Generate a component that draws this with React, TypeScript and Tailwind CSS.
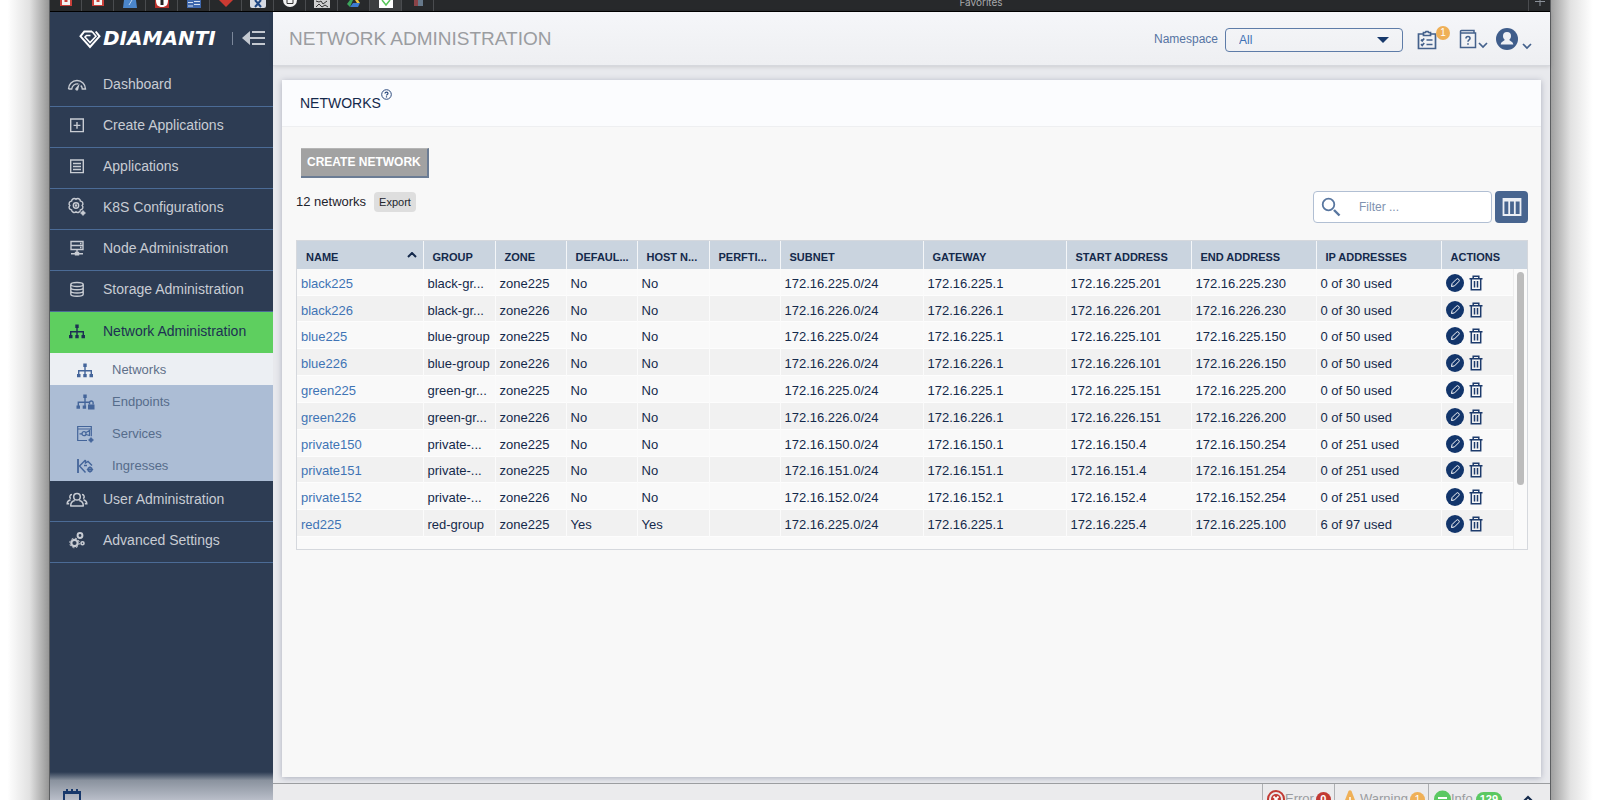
import type { ReactNode } from "react";

type Network = {
  name: string;
  group: string;
  zone: string;
  isDefault: string;
  host: string;
  subnet: string;
  gateway: string;
  start: string;
  end: string;
  used: string;
};

const networks: Network[] = [
  { name: "black225", group: "black-gr...", zone: "zone225", isDefault: "No", host: "No", subnet: "172.16.225.0/24", gateway: "172.16.225.1", start: "172.16.225.201", end: "172.16.225.230", used: "0 of 30 used" },
  { name: "black226", group: "black-gr...", zone: "zone226", isDefault: "No", host: "No", subnet: "172.16.226.0/24", gateway: "172.16.226.1", start: "172.16.226.201", end: "172.16.226.230", used: "0 of 30 used" },
  { name: "blue225", group: "blue-group", zone: "zone225", isDefault: "No", host: "No", subnet: "172.16.225.0/24", gateway: "172.16.225.1", start: "172.16.225.101", end: "172.16.225.150", used: "0 of 50 used" },
  { name: "blue226", group: "blue-group", zone: "zone226", isDefault: "No", host: "No", subnet: "172.16.226.0/24", gateway: "172.16.226.1", start: "172.16.226.101", end: "172.16.226.150", used: "0 of 50 used" },
  { name: "green225", group: "green-gr...", zone: "zone225", isDefault: "No", host: "No", subnet: "172.16.225.0/24", gateway: "172.16.225.1", start: "172.16.225.151", end: "172.16.225.200", used: "0 of 50 used" },
  { name: "green226", group: "green-gr...", zone: "zone226", isDefault: "No", host: "No", subnet: "172.16.226.0/24", gateway: "172.16.226.1", start: "172.16.226.151", end: "172.16.226.200", used: "0 of 50 used" },
  { name: "private150", group: "private-...", zone: "zone225", isDefault: "No", host: "No", subnet: "172.16.150.0/24", gateway: "172.16.150.1", start: "172.16.150.4", end: "172.16.150.254", used: "0 of 251 used" },
  { name: "private151", group: "private-...", zone: "zone225", isDefault: "No", host: "No", subnet: "172.16.151.0/24", gateway: "172.16.151.1", start: "172.16.151.4", end: "172.16.151.254", used: "0 of 251 used" },
  { name: "private152", group: "private-...", zone: "zone226", isDefault: "No", host: "No", subnet: "172.16.152.0/24", gateway: "172.16.152.1", start: "172.16.152.4", end: "172.16.152.254", used: "0 of 251 used" },
  { name: "red225", group: "red-group", zone: "zone225", isDefault: "Yes", host: "Yes", subnet: "172.16.225.0/24", gateway: "172.16.225.1", start: "172.16.225.4", end: "172.16.225.100", used: "6 of 97 used" },
];

const columns = [
  { label: "NAME", width: "w-[126px]" },
  { label: "GROUP", width: "w-[72px]" },
  { label: "ZONE", width: "w-[71px]" },
  { label: "DEFAUL...", width: "w-[71px]" },
  { label: "HOST N...", width: "w-[72px]" },
  { label: "PERFTI...", width: "w-[71px]" },
  { label: "SUBNET", width: "w-[143px]" },
  { label: "GATEWAY", width: "w-[143px]" },
  { label: "START ADDRESS", width: "w-[125px]" },
  { label: "END ADDRESS", width: "w-[125px]" },
  { label: "IP ADDRESSES", width: "w-[125px]" },
  { label: "ACTIONS", width: "w-[86px]" },
];

function Icon({ children }: { children: ReactNode }) {
  return (
    <svg width="20" height="20" viewBox="0 0 20 20" fill="none" stroke="currentColor" strokeWidth="1.4" className="shrink-0" aria-hidden="true">
      {children}
    </svg>
  );
}

const dashboardIcon = (
  <Icon>
    <path d="M1.500 15a8.500 8.500 0 0 1 17 0h-3.200a5.600 5.600 0 0 0-1.500-3.600M1.500 15h3.200a5.600 5.600 0 0 1 6.600-5" />
    <path d="M8.200 14.700 12.600 9.500l-1.400 6.200a1.600 1.600 0 0 1-3-1Z" fill="currentColor" stroke="none" />
  </Icon>
);

const createIcon = (
  <Icon>
    <path d="M3.700 4h12.600v12.600H3.700zM10 7v6.800M6.600 10.400h6.800" />
  </Icon>
);

const applicationsIcon = (
  <Icon>
    <path d="M3.700 4h12.600v12.600H3.700z" />
    <path d="M6 7.500h8M6 10.500h8M6 13.500h8" strokeWidth="1.300" />
  </Icon>
);

const k8sIcon = (
  <Icon>
    <path d="M15.200 8.500A2.600 2.600 0 0 1 13.400 12.900A2.600 2.600 0 0 1 9 14.700A2.600 2.600 0 0 1 4.600 12.900A2.600 2.600 0 0 1 2.800 8.500A2.600 2.600 0 0 1 4.600 4.100A2.600 2.600 0 0 1 9 2.300A2.600 2.600 0 0 1 13.400 4.100A2.600 2.600 0 0 1 15.200 8.500Z" />
    <circle cx="9" cy="8.500" r="2.700" />
    <circle cx="9" cy="8.500" r=".6" />
    <circle cx="16" cy="16" r="2" fill="currentColor" stroke="none" />
    <path d="M16 13.200v5.600M13.200 16h5.600" strokeWidth="1" />
  </Icon>
);

const nodeIcon = (
  <Icon>
    <path d="M4 3.500h12v8H4zM4 7.500h12M13 5.500h1.500M13 9.500h1.500M10 11.500v3M4 15.700h12M8.500 14.500h3v2.200h-3z" />
  </Icon>
);

const storageIcon = (
  <Icon>
    <ellipse cx="10" cy="5.500" rx="6.200" ry="2" />
    <path d="M3.800 5.500v9.700c0 1.100 2.800 2 6.200 2s6.200-.9 6.200-2V5.500M3.800 8.700c0 1.100 2.800 2 6.200 2s6.200-.9 6.200-2M3.800 12c0 1.100 2.800 2 6.200 2s6.200-.9 6.200-2" />
  </Icon>
);

const treeIcon = (
  <Icon>
    <path d="M8.300 3.500h3.400v3.400H8.300zM2 14h3.500v3.200H2zM8.300 14h3.400v3.200H8.300zM14.500 14H18v3.200h-3.500z" fill="currentColor" stroke="none" />
    <path d="M10 6v8.500M3.700 14.500v-3.700h12.600v3.700" />
  </Icon>
);

const endpointsIcon = (
  <Icon>
    <path d="M8.300 2.500h3.400v3.400H8.300zM1.500 13.600H5v3.200H1.500zM7.700 13.600h3.400v3.200H7.700zM13 12.400h6.500v5H13z" fill="currentColor" stroke="none" />
    <path d="M10 5v9M3.300 14v-3.800h11" />
    <path d="M14.500 12.500v-1.700a1.800 1.800 0 0 1 3.600 0v1.700" />
  </Icon>
);

const servicesIcon = (
  <Icon>
    <path d="M12 16.500H2.700v-14h13.600v9.800M2.700 5h13.600M4.500 9.800h2.700M11 8.500l3.500-2v5l-3.500-1" strokeWidth="1.200" />
    <circle cx="9" cy="9.700" r="2" strokeWidth="1.200" />
    <circle cx="16" cy="16" r="2" fill="currentColor" stroke="none" />
    <path d="M16 13.200v5.600M13.200 16h5.600" strokeWidth="1" />
  </Icon>
);

const ingressesIcon = (
  <Icon>
    <path d="M3 3v14" strokeWidth="1.800" />
    <path d="M10.500 4 4.500 10l6 6.500M10.500 4v3l2.500-1.500 4 4M9 9.500h3" />
    <circle cx="15" cy="13.500" r="2" />
    <path d="M15 10.300v6.400M11.800 13.500h6.400" strokeWidth="1" />
  </Icon>
);

const usersIcon = (
  <svg width="22" height="20" viewBox="0 0 22 20" fill="none" stroke="currentColor" strokeWidth="1.500" className="-mx-px shrink-0" aria-hidden="true">
    <circle cx="11" cy="7.800" r="3.300" />
    <path d="M4.700 16.900c0-3.600 2-5 4.100-5.400M17.300 16.900c0-3.600-2-5-4.100-5.400M4.200 17h13.600" />
    <path d="M6 5.500a2.300 2.300 0 0 0-1.200 4.200M16 5.500a2.300 2.300 0 0 1 1.200 4.200M4.500 10.800c-2 .5-3.300 1.700-3.300 4h2M17.500 10.800c2 .5 3.300 1.700 3.300 4h-2" />
  </svg>
);

const settingsIcon = (
  <Icon>
    <circle cx="7.500" cy="13" r="3.200" strokeWidth="2.200" />
    <circle cx="7.500" cy="13" r="4.800" strokeWidth="1" strokeDasharray="1.900 1.870" />
    <circle cx="13" cy="5.500" r="2.400" strokeWidth="2" />
    <circle cx="15.500" cy="13.300" r="1.500" strokeWidth="1.600" />
  </Icon>
);

function NavItem({ icon, label, active = false }: { icon: ReactNode; label: string; active?: boolean }) {
  return (
    <a
      href="#"
      className={
        active
          ? "flex h-[41px] items-center gap-4 bg-[#5ecf5f] pr-2 pb-1 pl-[17px] text-sm text-[#1d3153]"
          : "flex h-[41px] items-center gap-4 border-b border-[#4b6b96] pr-2 pb-1 pl-[17px] text-sm text-[#c8ccd3]"
      }
    >
      {icon}
      {label}
    </a>
  );
}

function SubItem({ icon, label, active = false }: { icon: ReactNode; label: string; active?: boolean }) {
  return (
    <a
      href="#"
      className={
        active
          ? "flex h-8 items-center gap-[17px] bg-[#eceff3] pt-0.5 pl-[25px] text-[13px] leading-4 text-[#5f7089]"
          : "flex h-8 items-center gap-[17px] bg-[#acbdd5] pt-0.5 pl-[25px] text-[13px] leading-4 text-[#566c8b]"
      }
    >
      <span className="flex text-[#44659a]">{icon}</span>
      <span>{label}</span>
    </a>
  );
}

function Tab({ children, active = false }: { children: ReactNode; active?: boolean }) {
  return (
    <div className={active ? "flex w-8 items-end justify-center border-r border-[#4a4c4f] bg-[#3c3e40] pb-[3px]" : "flex w-8 items-end justify-center border-r border-[#4a4c4f] pb-[3px]"}>
      <svg width="16" height="8" viewBox="0 0 16 8" aria-hidden="true">
        {children}
      </svg>
    </div>
  );
}

function TabBar() {
  return (
    <div className="flex h-3 shrink-0 overflow-hidden border-b border-black bg-[#27292b]">
      <Tab>
        <path d="M2 0h12v6H2z" fill="#c9403a" />
        <path d="M4 0h8v5H4z" fill="#f3f3f3" />
        <path d="M6.500 0h3v2h-3z" fill="#c9403a" />
      </Tab>
      <Tab>
        <path d="M2 0h12v6H2z" fill="#c9403a" />
        <path d="M4 0h8v5H4z" fill="#f3f3f3" />
        <path d="M6.500 0h3v2h-3z" fill="#c9403a" />
      </Tab>
      <Tab>
        <path d="M2 0h12l1 8H1z" fill="#4b86cb" />
        <path d="M10 0 7 5" stroke="#b9d3f0" />
      </Tab>
      <Tab>
        <path d="M1 0h14v8H1z" fill="#b9322c" />
        <path d="M2 0h12c0 5-2 7-6 7S2 5 2 0Z" fill="#fff" />
        <path d="M6.500 0h3v5h-3z" fill="#222" />
      </Tab>
      <Tab>
        <path d="M1 0h14v8H1z" fill="#3f68ad" />
        <path d="M2 2.500h5M8 1.500h6M8 4.500h6M2 6h5" stroke="#d5e1f2" />
      </Tab>
      <Tab>
        <path d="M1 0h14l-7 7z" fill="#cc3a32" />
      </Tab>
      <Tab>
        <path d="M0 0h16v6a2 2 0 0 1-2 2H2a2 2 0 0 1-2-2z" fill="#d6dae2" />
        <path d="m5 0 6 7M11 0 5 7" stroke="#1f4783" strokeWidth="2" />
      </Tab>
      <Tab>
        <path d="M1 0h14a7 7 0 0 1-14 0Z" fill="#f2f2f2" />
        <path d="M5 0v3.500h6V0" stroke="#333" fill="none" />
      </Tab>
      <Tab>
        <path d="M0 0h16v8H0z" fill="#cfcfcf" />
        <path d="M2 1l3 1 2-1 2 3 4-3M2 7l3-3 3 3 3-2 3 2" stroke="#333" fill="none" />
      </Tab>
      <Tab>
        <path d="M1 4 4 0h3L4 7z" fill="#3ba55c" />
        <path d="M4 7h8l2-4H7z" fill="#3d7ad0" />
        <path d="M9 0h3l2 3h-3z" fill="#ecc443" />
      </Tab>
      <Tab active>
        <path d="M1 0h14v8H1z" fill="#fff" />
        <path d="m4 0 4 5 4-5" stroke="#58c65a" strokeWidth="1.500" fill="none" />
      </Tab>
      <Tab>
        <path d="M4 0h4v6H4z" fill="#8a4347" />
        <path d="M8 0h5v6H8z" fill="#66788a" />
      </Tab>
      <div className="flex flex-1 items-end justify-center pb-1">
        <span className="text-[10px] leading-[10px] text-[#a6a8aa]" style={{ fontFamily: "Inter, sans-serif" }}>Favorites</span>
      </div>
      <button type="button" aria-label="New tab" className="flex w-[22px] items-start justify-center border-l border-[#4a4c4f] text-[#8b9199]">
        <svg width="12" height="6" viewBox="0 0 12 6" stroke="currentColor" aria-hidden="true">
          <path d="M1 1.500h10M6 0v6" />
        </svg>
      </button>
    </div>
  );
}

function Sidebar() {
  return (
    <aside className="flex w-[223px] shrink-0 flex-col overflow-hidden bg-[#2d3c53]">
      <div className="flex h-[54px] shrink-0 items-center pb-0.5 pl-[29px] text-white">
        <svg width="22" height="19" viewBox="0 0 22 19" fill="none" stroke="currentColor" strokeWidth="2" className="mt-0.5 shrink-0" aria-hidden="true">
          <path d="M13 1.500H5.300L1.500 6.300 11 17l9.500-10.700L16.700 1.500" />
          <path d="M13 1.500 17 6.300l-6 6.200-5-5.500 1.500-1.500h4" strokeWidth="1.600" />
        </svg>
        <span className="ml-0.5 text-[20px] leading-6 font-bold italic" style={{ fontFamily: "'DejaVu Sans', sans-serif" }}>DIAMANTI</span>
        <span className="ml-auto h-[13px] w-px bg-[#7b879a]" />
        <button type="button" aria-label="Collapse menu" className="mr-[7px] ml-[9px] text-[#c3c8d0]">
          <svg width="24" height="16" viewBox="0 0 24 16" fill="currentColor" aria-hidden="true">
            <path d="M0 8 8 1v14zM10 1h13v2H10zM8 7h15v2H8zM10 13h13v2H10z" />
          </svg>
        </button>
      </div>
      <nav className="flex-1 overflow-hidden">
        <NavItem icon={dashboardIcon} label="Dashboard" />
        <NavItem icon={createIcon} label="Create Applications" />
        <NavItem icon={applicationsIcon} label="Applications" />
        <NavItem icon={k8sIcon} label="K8S Configurations" />
        <NavItem icon={nodeIcon} label="Node Administration" />
        <NavItem icon={storageIcon} label="Storage Administration" />
        <NavItem icon={treeIcon} label="Network Administration" active />
        <SubItem icon={treeIcon} label="Networks" active />
        <SubItem icon={endpointsIcon} label="Endpoints" />
        <SubItem icon={servicesIcon} label="Services" />
        <SubItem icon={ingressesIcon} label="Ingresses" />
        <NavItem icon={usersIcon} label="User Administration" />
        <NavItem icon={settingsIcon} label="Advanced Settings" />
      </nav>
      <div className="h-7 shrink-0 overflow-hidden bg-linear-to-b from-[#2d3c53] via-[#8a929e] via-30% to-[#b9bec9] pt-[17px] pl-[13px]">
        <svg width="18" height="18" viewBox="0 0 18 18" fill="none" stroke="#17386b" strokeWidth="2" aria-hidden="true">
          <path d="M1 3h16v14H1zM1 4h16M4 0v3M9 0v3M14 0v3" />
        </svg>
      </div>
    </aside>
  );
}

function SmallChevron() {
  return (
    <svg width="10" height="7" viewBox="0 0 10 7" fill="none" stroke="currentColor" strokeWidth="1.700" aria-hidden="true">
      <path d="m1 1 4 4 4-4" />
    </svg>
  );
}

function Header() {
  return (
    <header className="z-10 flex h-[54px] shrink-0 items-center justify-between border-b border-[#d6d8dd] bg-linear-to-b from-[#f5f6f9] to-[#eeeff2] pr-[18px] pl-4 shadow-[0_1px_4px_rgba(0,0,0,0.12)]">
      <h1 className="text-[19px] leading-6 text-[#9b9da1]">NETWORK ADMINISTRATION</h1>
      <div className="flex items-center text-[#44618c]">
        <label htmlFor="namespace" className="mr-[7px] text-xs text-[#5674a3]">Namespace</label>
        <div className="relative mt-0.5 mr-[14px]">
          <select id="namespace" className="block h-6 w-[178px] appearance-none rounded border border-[#5e7ca8] pr-8 pl-[13px] text-xs text-[#3d71b5]">
            <option>All</option>
          </select>
          <svg width="12" height="6" viewBox="0 0 12 6" fill="#17386b" className="pointer-events-none absolute top-[9px] right-[14px]" aria-hidden="true">
            <path d="M0 0h12L6 6z" />
          </svg>
        </div>
        <button type="button" aria-label="Tasks" className="relative mt-0.5 mr-[22px]">
          <svg width="20" height="20" viewBox="0 0 20 20" fill="none" stroke="currentColor" strokeWidth="1.700" aria-hidden="true">
            <path d="M6.500 4h-5v14.500h17V4h-5" />
            <path d="M6.500 2.500h2l.5-1h2l.5 1h2v3h-7zM9.500 10h6M9.500 14.500h6M4 9.700l1.200 1.200 2-2.400M4 14.200l1.200 1.200 2-2.400" />
          </svg>
          <span className="absolute -top-1 -right-[13px] flex h-[14px] w-[14px] items-center justify-center rounded-full bg-[#efb057] text-[10px] leading-none text-white">1</span>
        </button>
        <button type="button" aria-label="Help" className="mr-2 flex items-end">
          <svg width="18" height="20" viewBox="0 0 18 20" fill="none" stroke="currentColor" strokeWidth="1.500" aria-hidden="true">
            <path d="M1.500 4h15v14.500h-15V2.500a1 1 0 0 1 1-1H15V4" />
            <path d="M7 9.500c0-2.600 4-2.600 4 0 0 1.500-2 1.500-2 3.300M9 14.300v1.400" strokeWidth="1.600" />
          </svg>
          <span className="ml-px"><SmallChevron /></span>
        </button>
        <button type="button" aria-label="Account" className="flex items-end">
          <svg width="22" height="22" viewBox="0 0 22 22" aria-hidden="true">
            <circle cx="11" cy="11" r="11" fill="#3f5d8b" />
            <path d="M11 4a4 4 0 0 1 4 4c0 1.700-.8 3-1.700 3.800.2 1.300 3.700 1.500 4 4.700H4.700c.3-3.200 3.800-3.400 4-4.700C7.800 11 7 9.700 7 8a4 4 0 0 1 4-4Z" fill="#eef0f5" />
          </svg>
          <span className="ml-1"><SmallChevron /></span>
        </button>
      </div>
    </header>
  );
}

function RowActions({ name }: { name: string }) {
  return (
    <div className="flex items-center gap-[5px]">
      <button type="button" aria-label={`Edit ${name}`}>
        <svg width="18" height="18" viewBox="0 0 18 18" aria-hidden="true">
          <circle cx="9" cy="9" r="9" fill="#12356b" />
          <path d="m5.500 12.500.6-3 4.200-4.200a1.200 1.200 0 0 1 2.400 2.400l-4.200 4.200z" fill="none" stroke="#fff" strokeWidth="1" />
        </svg>
      </button>
      <button type="button" aria-label={`Delete ${name}`}>
        <svg width="14" height="16" viewBox="0 0 14 16" fill="none" stroke="#1d3b6c" strokeWidth="1.500" aria-hidden="true">
          <path d="M.5 3.700h13M4.200 3.500V1.200h5.600v2.300M2.300 4v10.800h9.400V4M5.500 6v6.500M8.500 6v6.500" />
        </svg>
      </button>
    </div>
  );
}

function NetworkTable() {
  return (
    <div className="relative mt-[17px] border border-[#d5d8dd] bg-[#fafafa] pb-3">
      <table className="h-[296px] w-full table-fixed border-collapse text-left text-[13px] leading-4 text-[#14294b]">
        <thead>
          <tr className="h-7 bg-[#cad4df]">
            {columns.map((col) => (
              <th key={col.label} scope="col" className={`${col.width} h-7 border-r border-[#f4f6f8] pt-1 pr-1 pb-0 pl-[9px] text-[11px] font-bold whitespace-nowrap last:border-r-0`}>
                <div className="flex items-center justify-between">
                  <span>{col.label}</span>
                  {col.label === "NAME" && (
                    <svg width="10" height="6" viewBox="0 0 10 6" fill="none" stroke="currentColor" strokeWidth="2" className="mr-0.5 mb-1 shrink-0" aria-hidden="true">
                      <path d="m1 5 4-4 4 4" />
                    </svg>
                  )}
                </div>
              </th>
            ))}
          </tr>
        </thead>
        <tbody className="whitespace-nowrap">
          {networks.map((n) => (
            <tr key={n.name} className="border-b border-[#fdfdfd] odd:bg-[#f9f9f9] even:bg-[#f1f1f1]">
              <td className="border-r border-[#fbfbfb] px-1 pt-1"><a href="#" className="text-[#3f74b5]">{n.name}</a></td>
              <td className="border-r border-[#fbfbfb] px-1 pt-1">{n.group}</td>
              <td className="border-r border-[#fbfbfb] px-1 pt-1">{n.zone}</td>
              <td className="border-r border-[#fbfbfb] px-1 pt-1">{n.isDefault}</td>
              <td className="border-r border-[#fbfbfb] px-1 pt-1">{n.host}</td>
              <td className="border-r border-[#fbfbfb] px-1 pt-1" />
              <td className="border-r border-[#fbfbfb] px-1 pt-1">{n.subnet}</td>
              <td className="border-r border-[#fbfbfb] px-1 pt-1">{n.gateway}</td>
              <td className="border-r border-[#fbfbfb] px-1 pt-1">{n.start}</td>
              <td className="border-r border-[#fbfbfb] px-1 pt-1">{n.end}</td>
              <td className="border-r border-[#fbfbfb] px-1 pt-1">{n.used}</td>
              <td className="px-1 pt-0.5"><RowActions name={n.name} /></td>
            </tr>
          ))}
        </tbody>
      </table>
      {/* scroll track */}
      <div className="absolute top-7 right-0 bottom-0 w-[14px] border-l border-[#ececec] bg-[#fafafa] pt-[3px] pl-[3px]">
        <div className="h-[213px] w-[7px] rounded-full bg-[#bcbcbc]" />
      </div>
    </div>
  );
}

function Panel() {
  return (
    <section className="flex flex-1 flex-col overflow-hidden bg-[#f8f8f8] shadow-[0_1px_6px_rgba(60,70,100,0.35)]">
      <div className="flex h-[47px] shrink-0 items-center border-b border-[#eeeff1] bg-[#fbfcfe] pl-[18px] text-[#14294b]">
        <h2 className="text-sm">NETWORKS</h2>
        <button type="button" aria-label="About networks" className="mb-[18px]">
          <svg width="11" height="11" viewBox="0 0 11 11" fill="none" stroke="#2b4a7c" aria-hidden="true">
            <circle cx="5.500" cy="5.500" r="4.800" />
            <path d="M4 4.600c0-1.900 3-1.900 3 0 0 1-1.500 1-1.500 2M5.500 7.300v1.200" strokeWidth="1.200" />
          </svg>
        </button>
      </div>
      <div className="pt-[21px] pr-[13px] pl-[14px]">
        <button type="button" className="ml-[5px] block h-[30px] border-t border-r-2 border-b-2 border-t-[#b5b5b5] border-r-[#6b7c94] border-b-[#6b7c94] bg-[#a2a2a2] px-[6px] pb-0.5 text-xs leading-4 font-bold whitespace-nowrap text-white">
          CREATE NETWORK
        </button>
        <div className="mt-[13px] flex h-8 items-start justify-between">
          <div className="flex h-[22px] items-center gap-2">
            <span className="text-[13px] leading-4 text-[#1f242c]">12 networks</span>
            <button type="button" className="h-5 rounded-sm bg-[#dedede] px-[5px] text-[11px] text-[#22262d]">Export</button>
          </div>
          <div className="flex gap-[3px]">
            <label className="flex h-8 w-[179px] items-center rounded border border-[#b1bfd3] bg-white pl-[7px]">
              <svg width="20" height="20" viewBox="0 0 20 20" fill="none" stroke="#58769f" className="shrink-0" aria-hidden="true">
                <circle cx="7.500" cy="7.500" r="5.800" strokeWidth="1.800" />
                <path d="m13 13 5.500 5.500" strokeWidth="2.400" />
              </svg>
              <input type="text" aria-label="Filter" placeholder="Filter ..." className="ml-[18px] w-full min-w-0 text-xs outline-none placeholder:text-[#8093b0]" />
            </label>
            <button type="button" aria-label="Columns" className="flex h-8 w-[33px] items-center justify-center rounded-sm bg-[#48658f]">
              <svg width="20" height="18" viewBox="0 0 20 18" fill="none" stroke="#eceff4" strokeWidth="1.800" aria-hidden="true">
                <path d="M1.500 1h17v16h-17zM1 2.500h18M7.200 3v14M12.800 3v14" />
              </svg>
            </button>
          </div>
        </div>
        <NetworkTable />
      </div>
    </section>
  );
}

function StatusBar() {
  return (
    <footer className="h-[17px] shrink-0 overflow-hidden border-t border-[#9b9da0] bg-[#ebebed] text-[13px] text-[#9a9ca0]">
      <div className="flex h-[30px] items-center justify-end">
        <div className="flex h-full w-[72px] items-center border-l border-[#aeb0b3] pl-1">
          <svg width="18" height="18" viewBox="0 0 18 18" fill="none" stroke="#c23a34" className="shrink-0" aria-hidden="true">
            <circle cx="9" cy="9" r="8" strokeWidth="2" />
            <circle cx="9" cy="9" r="5" fill="#c23a34" stroke="none" />
            <path d="m6.500 6.500 5 5M11.500 6.500l-5 5" stroke="#fff" strokeWidth="1.800" />
          </svg>
          Error
          <span className="ml-0.5 flex h-[15px] w-[15px] shrink-0 items-center justify-center rounded-full bg-[#c23a34] text-[11px] font-bold text-white">0</span>
        </div>
        <div className="flex h-full w-[94px] items-center border-l border-[#aeb0b3] pl-[7px]">
          <svg width="16" height="18" viewBox="0 0 16 18" className="mr-0.5 shrink-0" aria-hidden="true">
            <path d="M6.500 1a2 2 0 0 1 3 0L16 18H0z" fill="#efb057" />
            <path d="M8 7v5M8 13.500v2" stroke="#fff" strokeWidth="1.500" />
          </svg>
          Warning
          <span className="ml-0.5 flex h-[15px] w-[15px] shrink-0 items-center justify-center rounded-full bg-[#efb057] text-[11px] text-white">1</span>
        </div>
        <div className="flex h-full w-[122px] items-center border-l border-[#aeb0b3] pl-[5px]">
          <svg width="17" height="18" viewBox="0 0 17 18" className="shrink-0" aria-hidden="true">
            <circle cx="8.500" cy="9" r="8.500" fill="#5bc862" />
            <path d="M4 8h9" stroke="#fff" strokeWidth="2" />
          </svg>
          Info
          <span className="ml-[3px] flex h-[15px] items-center rounded-full bg-[#5bc862] px-1 text-[11px] font-bold text-white">129</span>
          <button type="button" aria-label="Expand events" className="ml-auto pr-4">
            <svg width="12" height="8" viewBox="0 0 12 8" fill="none" stroke="#14294b" strokeWidth="2.200" aria-hidden="true">
              <path d="m1 7 5-5 5 5" />
            </svg>
          </button>
        </div>
      </div>
    </footer>
  );
}

export default function App() {
  return (
    <div className="flex h-screen overflow-hidden bg-white" style={{ fontFamily: "'Liberation Sans', Arial, sans-serif" }}>
      <div className="w-[49px] shrink-0 bg-linear-to-l from-[#969696] via-[#e2e2e2] via-40% to-white to-85%" />
      <div className="flex min-w-0 flex-1 flex-col border-x border-[#5c5e61]">
        <TabBar />
        <div className="flex min-h-0 flex-1">
          <Sidebar />
          <main className="flex min-w-0 flex-1 flex-col bg-[#e8e9ed]">
            <Header />
            <div className="flex min-h-0 flex-1 px-[9px] pt-[14px] pb-[6px]">
              <Panel />
            </div>
            <StatusBar />
          </main>
        </div>
      </div>
      <div className="w-[49px] shrink-0 bg-linear-to-r from-[#a0a0a0] via-[#e2e2e2] via-40% to-white to-85%" />
    </div>
  );
}
